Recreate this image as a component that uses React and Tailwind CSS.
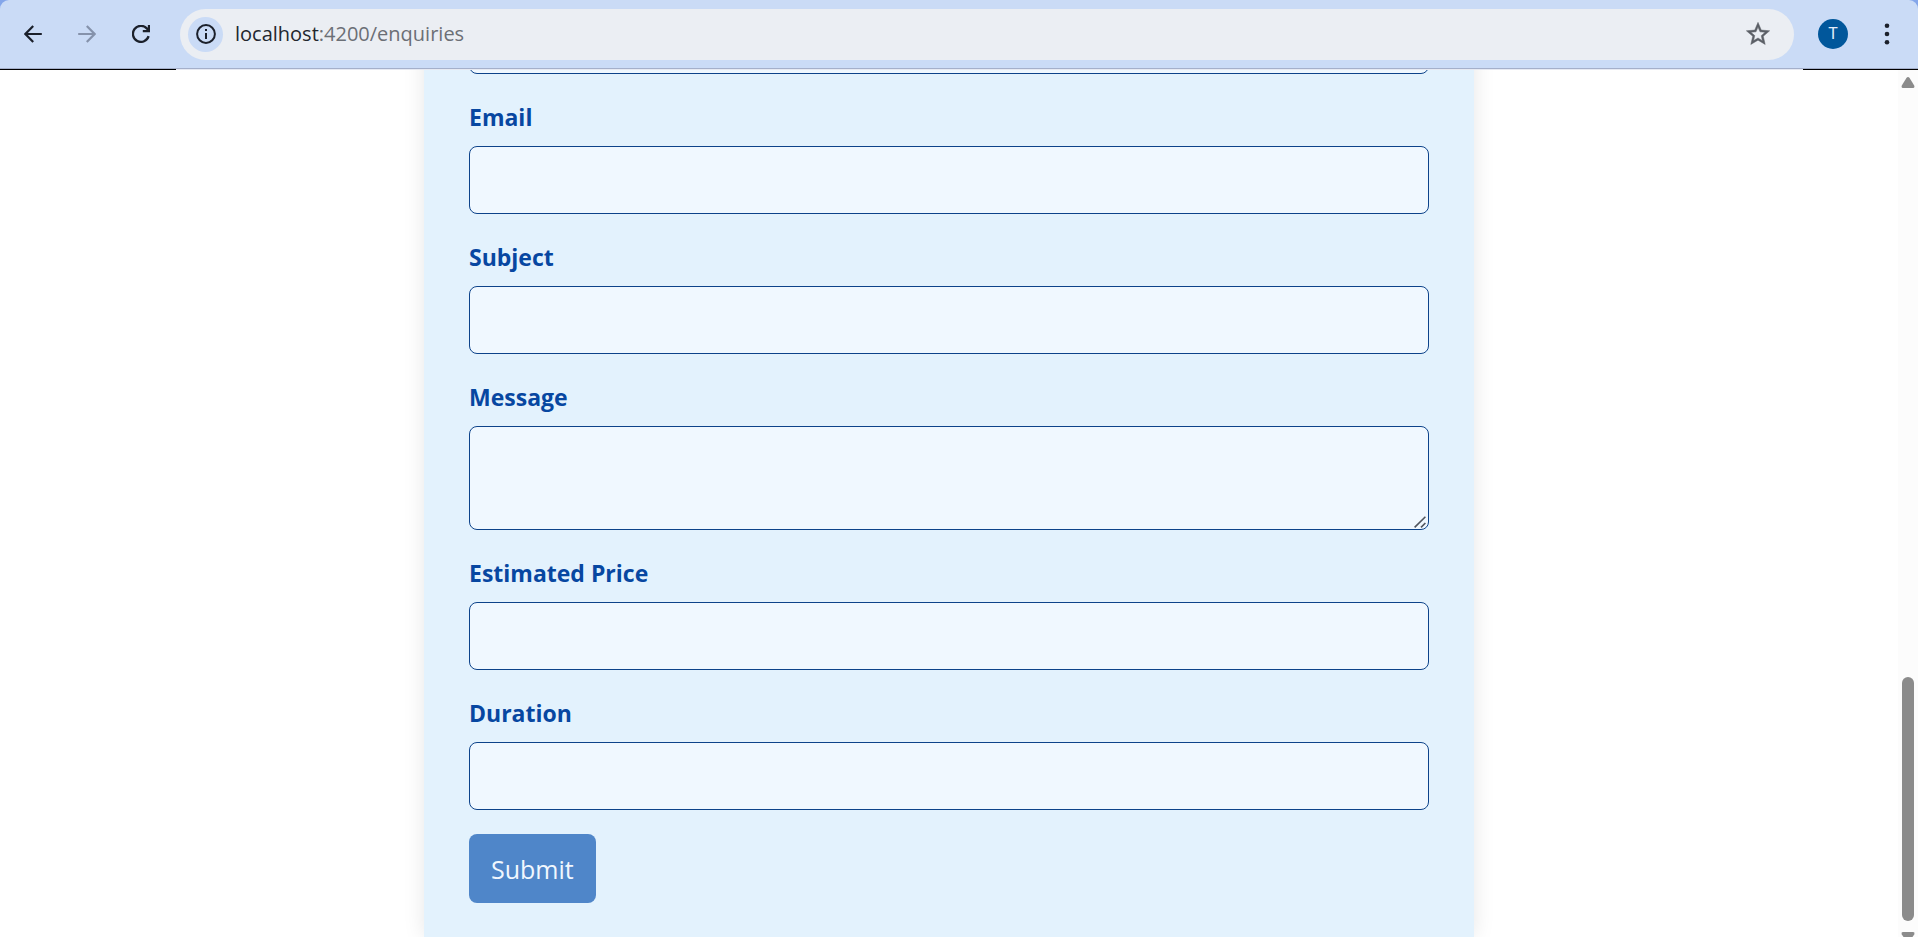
import React from "react";

const iconButton = "flex size-[54px] items-center justify-center";

function Toolbar() {
  return (
    <header className="bg-[#84a6ea]">
      <div className="flex h-[68px] items-center rounded-t-[9px] bg-[#cadbf6] pr-1 pl-[6px]">
        <button type="button" aria-label="Back" className={iconButton}>
          <svg viewBox="0 0 18 18" className="size-[18px]" fill="none" stroke="#1b202b" strokeWidth="2.2">
            <path d="M17.8 9H1.8M9.2 1.1 1.4 9l7.8 7.9" />
          </svg>
        </button>
        <button type="button" aria-label="Forward" className={iconButton}>
          <svg viewBox="0 0 18 18" className="size-[18px]" fill="none" stroke="#8592ab" strokeWidth="2.2">
            <path d="M.2 9h16M8.8 1.1 16.6 9l-7.8 7.9" />
          </svg>
        </button>
        <button type="button" aria-label="Reload" className={iconButton}>
          <svg viewBox="0 0 18 18" className="size-[18px]" fill="none" stroke="#1b202b" strokeWidth="2.3">
            <path d="M16.6 11.2A8 8 0 1 1 14.8 3.4L17 5.8" />
            <path d="M17 0v6.2h-6.2" />
          </svg>
        </button>
        <div className="ml-3 flex h-[51px] min-w-0 flex-1 items-center rounded-full bg-[#ebeef3] pr-[22px] pl-2">
          <button type="button" aria-label="Site information" className="flex size-[35px] shrink-0 items-center justify-center rounded-full bg-[#cadbf6]">
            <svg viewBox="0 0 20 20" className="size-5" fill="none" stroke="#1b202b" strokeWidth="2">
              <circle cx="10" cy="10" r="8.9" />
              <path d="M10 9v6M10 5v2.1" />
            </svg>
          </button>
          <p className="ml-3 min-w-0 flex-1 truncate text-xl text-[#6b6f76]">
            <span className="text-[#22262e]">localhost</span>:4200/enquiries
          </p>
          <button type="button" aria-label="Bookmark this page" className="flex size-7 shrink-0 items-center justify-center">
            <svg viewBox="0 0 24 24" className="size-7" fill="#5b5f66" stroke="#5b5f66" strokeWidth=".4">
              <path d="m22 9.24-7.19-.62L12 2 9.19 8.63 2 9.24l5.46 4.73L5.82 21 12 17.27 18.18 21l-1.63-7.03L22 9.24zM12 15.4l-3.76 2.27 1-4.28-3.32-2.88 4.38-.38L12 6.1l1.71 4.04 4.38.38-3.32 2.88 1 4.28L12 15.4z" />
            </svg>
          </button>
        </div>
        <button type="button" aria-label="Profile" className="ml-6 flex size-[30px] items-center justify-center rounded-full bg-[#01579b] font-['Roboto',sans-serif] text-base text-[#e4eefa]">
          T
        </button>
        <button type="button" aria-label="Menu" className="ml-3 flex size-[54px] items-center justify-center">
          <svg viewBox="0 0 6 22" className="h-[22px] w-[6px]" fill="#1b202b">
            <circle cx="3" cy="2.8" r="2.3" />
            <circle cx="3" cy="11" r="2.3" />
            <circle cx="3" cy="19.2" r="2.3" />
          </svg>
        </button>
      </div>
      <div className="h-px bg-[#a4afca]" />
      <div className="flex h-px justify-between bg-[#e6e9f2]">
        <div className="w-44 bg-black" />
        <div className="w-[115px] bg-black" />
      </div>
    </header>
  );
}

const control =
  "block w-full rounded-lg border border-[#0d438a] bg-[#f0f8ff] px-4 text-2xl text-[#22262e] outline-none";

function Field({ id, label, multiline = false }) {
  return (
    <div className="mb-6">
      <label htmlFor={id} className="mb-[11px] block pt-px text-[23px] leading-9 font-bold text-[#0747a1]">
        {label}
      </label>
      {multiline ? (
        <div className="relative">
          <textarea id={id} className={`${control} h-[104px] resize-y [&::-webkit-resizer]:hidden`} />
          <svg viewBox="0 0 12 12" className="pointer-events-none absolute right-[3px] bottom-[2px] size-3" fill="none" stroke="#50555e" strokeWidth="1.6">
            <path d="M.6 11.4 11.4.8M7 11.4l4.4-4.4" />
          </svg>
        </div>
      ) : (
        <input id={id} type="text" className={`${control} h-[68px]`} />
      )}
    </div>
  );
}

function Scrollbar() {
  return (
    <div aria-hidden="true" className="flex w-5 shrink-0 flex-col items-center overflow-hidden bg-[#fcfcfc] pt-[7px]">
      <svg viewBox="0 0 14 11" className="h-[11px] w-[14px] shrink-0" fill="#8b8b8b">
        <path d="M5.4 1Q7-.8 8.6 1l4.6 7.4Q14 11 12 11H2Q0 11 .8 8.4z" />
      </svg>
      <div className="flex-1" />
      <div className="h-[244px] w-3 shrink-0 rounded-full bg-[#8b8b8b]" />
      <svg viewBox="0 0 14 5" className="mt-[11px] h-[5px] w-[14px] shrink-0" fill="#8b8b8b">
        <path d="M2 0h10q2 0 1.2 2.4L11.5 5h-9L.8 2.4Q0 0 2 0z" />
      </svg>
    </div>
  );
}

export default function App() {
  return (
    <div className="flex h-screen flex-col bg-white font-['Open_Sans','Noto_Sans',sans-serif]">
      <Toolbar />
      <div className="flex min-h-0 flex-1">
        <main className="flex min-w-0 flex-1 flex-col items-center justify-end overflow-hidden">
          <form
            onSubmit={(event) => event.preventDefault()}
            className="w-full max-w-[1050px] bg-[#e3f2fd] px-[45px] pb-[34px] shadow-[0_0_20px_rgba(0,0,0,0.1)]"
          >
            <div className="mb-6">
              <input type="text" aria-label="Name" className={`${control} h-[68px]`} />
            </div>
            <Field id="email" label="Email" />
            <Field id="subject" label="Subject" />
            <Field id="message" label="Message" multiline />
            <Field id="price" label="Estimated Price" />
            <Field id="duration" label="Duration" />
            <button type="submit" className="block h-[69px] rounded-lg bg-[#4f86c9] px-[22px] pt-0.5 text-[25px] text-[#f1f7fe]">
              Submit
            </button>
          </form>
        </main>
        <Scrollbar />
      </div>
    </div>
  );
}
